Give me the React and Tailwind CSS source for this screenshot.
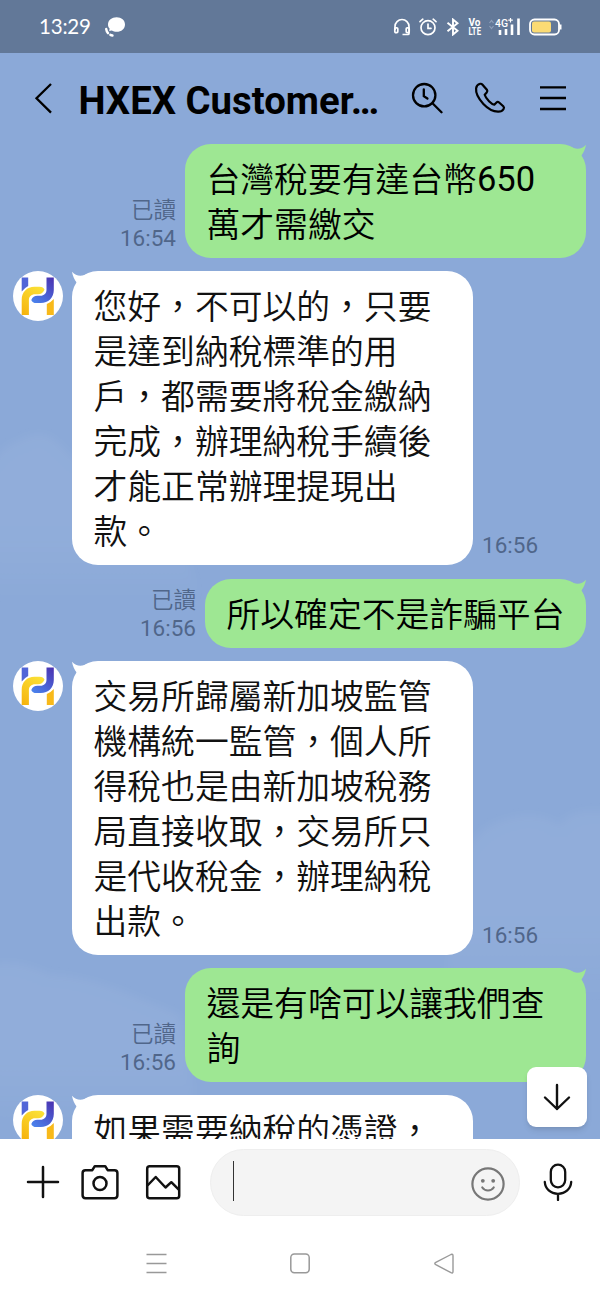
const messages = [
  { id: 1, mine: true, time: '16:54', lines: ['台灣稅要有達台幣650', '萬才需繳交'] },
  { id: 2, time: '16:56', lines: ['您好，不可以的，只要', '是達到納稅標準的用', '戶，都需要將稅金繳納', '完成，辦理納稅手續後', '才能正常辦理提現出', '款。'] },
  { id: 3, mine: true, short: true, time: '16:56', lines: ['所以確定不是詐騙平台'] },
  { id: 4, time: '16:56', lines: ['交易所歸屬新加坡監管', '機構統一監管，個人所', '得稅也是由新加坡稅務', '局直接收取，交易所只', '是代收稅金，辦理納稅', '出款。'] },
  { id: 5, mine: true, time: '16:56', lines: ['還是有啥可以讓我們查', '詢'] },
  { id: 6, lines: ['如果需要納稅的憑證，'] },
]

function StatusBar() {
  return (
    <div className="h-[53px] shrink-0 bg-[#627898] flex items-center pl-[39px] pr-[38px] text-white">
      <span className="font-['Lato','Roboto',sans-serif] text-[20.500px] leading-none w-[52px] tracking-[-0.200px] whitespace-nowrap">13:29</span>
      <svg className="ml-[13px] w-[22px] h-[22px]" viewBox="0 0 22 22" fill="none">
        <path d="M12.600 1.200c4.800 0 8.400 3.100 8.400 7.200s-3.600 7.400-8.400 7.400c-1.800 0-3.400-.4-4.800-1.300l-2.600.6.400-2.500C4.500 11.400 4 10 4 8.400c0-4.100 3.800-7.200 8.600-7.200z" fill="white" />
        <path d="M2.200 13c.4 3.200 2.600 5.900 6.300 6.500" stroke="white" strokeWidth="2.400" strokeLinecap="round" strokeDasharray="4.500 3" />
      </svg>
      <div className="flex-1" />
      <svg className="w-[18px] h-[18px]" viewBox="0 0 18 18" fill="none" stroke="white" strokeWidth="1.700">
        <path d="M2 12V8.500a7 7 0 0 1 14 0V12M16 12v3.500q0 1-1 1H9.500" />
        <rect x="1.800" y="9.800" width="3" height="4.800" rx="1" />
        <rect x="13.200" y="9.800" width="3" height="4.800" rx="1" />
      </svg>
      <svg className="ml-[8px] w-[18px] h-[18px]" viewBox="0 0 18 18" fill="none" stroke="white" strokeWidth="1.700" strokeLinecap="round">
        <circle cx="9" cy="9.700" r="7" />
        <path d="M9 6v4.300h3M1 3.600 3.800 1.200M17 3.600l-2.800-2.400" />
      </svg>
      <svg className="ml-[9px] w-[14px] h-[18px]" viewBox="0 0 14 18" fill="none" stroke="white" strokeWidth="1.900">
        <path d="m1.500 4.800 10 8-4.500 3.700v-15l4.500 3.700-10 8" />
      </svg>
      <svg className="ml-[8px] w-[14px] h-[20px]" viewBox="0 0 14 20" fill="white" fontFamily="Roboto" fontWeight="700" fontSize="10.500">
        <text x="0.500" y="9" textLength="12" lengthAdjust="spacingAndGlyphs">Vo</text>
        <text x="0.500" y="18" textLength="12.500" lengthAdjust="spacingAndGlyphs">LTE</text>
      </svg>
      <svg className="ml-[6px] w-[33px] h-[19px]" viewBox="0 0 33 19">
        <path d="M1.500 6 3.500 3.500l2 2.500M1.500 9 3.500 11.500l2-2.500" stroke="#8ea0ba" strokeWidth="1.200" fill="none" />
        <text x="7" y="9.500" fontSize="11.500" fontWeight="500" fill="white" fontFamily="Roboto" textLength="13" lengthAdjust="spacingAndGlyphs">4G</text>
        <path d="M22.500 1v4.500M20.300 3.200h4.500" stroke="white" strokeWidth="1.200" />
        <path d="M12 13v5M18 12v6M24 7.500V18M30.500 1.500V18" stroke="white" strokeWidth="2.600" />
      </svg>
      <svg className="ml-[8px] w-[33px] h-[18px]" viewBox="0 0 33 18">
        <rect x="1" y="1.500" width="29" height="15" rx="4.500" stroke="white" strokeWidth="1.800" fill="none" />
        <rect x="3" y="3.500" width="19" height="11" rx="2" fill="#fbdb74" />
        <path d="M31.500 6.500v5" stroke="white" strokeWidth="2" />
      </svg>
    </div>
  )
}

function Header() {
  return (
    <div className="h-[91px] shrink-0 flex items-center pl-[34px] pr-[32px] text-black">
      <svg className="w-[20px] h-[32px] -mt-[2px]" viewBox="0 0 20 32" fill="none" stroke="currentColor" strokeWidth="2.300">
        <path d="M17 2 2.500 16.300 17 30.600" />
      </svg>
      <h1 className="ml-[24.500px] mt-[4px] w-[332.500px] font-['Roboto',sans-serif] font-bold text-[38.300px] leading-[44px] whitespace-nowrap">HXEX Customer…</h1>
      <svg className="w-[32px] h-[32px] shrink-0 -mt-[2px]" viewBox="0 0 32 32" fill="none" stroke="currentColor" strokeWidth="2.300" strokeLinecap="round">
        <circle cx="13.200" cy="13.200" r="11.200" />
        <path d="m21.500 21.300 9 9M12.800 7.500v6.600l3.600 2.400" />
      </svg>
      <svg className="ml-[31px] w-[32px] h-[32px] shrink-0 -mt-[1px]" viewBox="0 0 32 32" fill="none" stroke="currentColor" strokeWidth="2.200" strokeLinejoin="round">
        <path d="M6.100 1.800c-1.700.4-3.700 2-4 4.600C1.600 11 4.800 17 9.400 21.900c4.500 4.700 10 7.600 14.600 7.800 2.600.1 4.700-1.200 5.600-2.700.7-1.100.5-1.900-.3-2.700l-4.200-3.800c-.9-.8-1.800-.8-2.600 0l-2.200 2.200c-1.600-.4-3.500-1.700-5.300-3.500-2-2-3.700-4.500-4.300-6.500l2-2.200c.8-.9.9-1.800.2-2.700L8.300 2.500c-.6-.7-1.300-.9-2.200-.7z" />
      </svg>
      <svg className="ml-[33px] w-[28px] h-[28px] shrink-0 -mt-[1px]" viewBox="0 0 28 28" stroke="currentColor" strokeWidth="2.300">
        <path d="M1 3.300h26M1 14h26M1 25h26" />
      </svg>
    </div>
  )
}

function Avatar() {
  return (
    <svg className="w-[50px] h-[50px] shrink-0" viewBox="0 0 50 50" fill="none">
      <defs>
        <linearGradient id="blue" x1="41" y1="6" x2="20" y2="32" gradientUnits="userSpaceOnUse">
          <stop stopColor="#4b2fae" />
          <stop offset="1" stopColor="#4a84ee" />
        </linearGradient>
        <linearGradient id="gold" x1="12" y1="44" x2="30" y2="16" gradientUnits="userSpaceOnUse">
          <stop stopColor="#f6b40e" />
          <stop offset="1" stopColor="#fbe338" />
        </linearGradient>
      </defs>
      <circle cx="25" cy="25" r="25" fill="white" />
      <path d="M8.700 6.500h6.500v8.500q-3.800 2-6.500 5.500z" fill="#5266d8" />
      <path d="M33.500 6.500h7.300V19c0 7.700-5.500 13-13 13h-4.500c-2.500 0-4.500-1.100-5-3.100 1.200-2.800 3.300-4.200 6-4.200h3c3.900 0 6.200-2.400 6.200-6.300z" fill="url(#blue)" />
      <path d="M8.700 44V28.800c0-7.800 5.200-13.100 12.800-13.100h5c2.500 0 4.500 1 5 3-1.500 3-3.500 4.600-6.500 4.600h-2.800c-4 0-6.300 2.300-6.300 6.200V44z" fill="url(#gold)" />
      <path d="M33.800 33q4-1.600 7-5V44h-7z" fill="#f8b91a" />
    </svg>
  )
}

function Tail({ mine }) {
  return (
    <svg
      className={`absolute top-0 w-[16px] h-[16px] ${mine ? 'right-0 -scale-x-100 text-[#9ee793]' : 'left-0 text-white'}`}
      viewBox="0 0 16 16"
      fill="currentColor"
    >
      <path d="M0 .8C2.500 3.400 5 4.700 8.500 4.700c2.300 0 4.300-.7 6.500-1.700L15 15 5 12C2.500 9 .6 5 0 .8z" />
    </svg>
  )
}

function Meta({ time, read }) {
  return (
    <div className="flex flex-col items-end pb-[6px] text-[22.500px] leading-[28px] text-[#50668a] whitespace-nowrap">
      {read && <span className="font-[350]">已讀</span>}
      {time && <span>{time}</span>}
    </div>
  )
}

// Latin digits sit a touch higher and heavier than the CJK text around them
function Line({ text }) {
  return (
    <p className="h-[45px]">
      {text.split(/(\d+)/).map((part, i) =>
        /^\d+$/.test(part) ? <span key={i} className="inline-block -translate-y-[1.500px] font-normal text-[34.500px] leading-none">{part}</span> : part
      )}
    </p>
  )
}

function Message({ mine, short, time, lines }) {
  return (
    <div className={`flex shrink-0 items-end gap-[9px] ${mine ? 'justify-end pr-[14px]' : 'pl-[13px]'}`}>
      {mine ? <Meta time={time} read /> : <div className="self-start h-[50px]"><Avatar /></div>}
      <div className={`relative rounded-[26px] pt-[14px] pb-[10px] px-[21.500px] text-[33.800px] leading-[45px] font-[350] whitespace-nowrap ${short ? 'w-[381px]' : 'w-[401px]'} ${mine ? 'bg-[#9ee793] text-black' : 'bg-white text-[#111]'}`}>
        <Tail mine={mine} />
        {lines.map(line => <Line key={line} text={line} />)}
      </div>
      {!mine && <Meta time={time} />}
    </div>
  )
}

function Clouds() {
  return (
    <svg className="absolute inset-0 w-full h-full" viewBox="0 0 600 1086" fill="none">
      <defs>
        <linearGradient id="cloud" x1="0" y1="0" x2="0" y2="1">
          <stop stopColor="white" stopOpacity="0.050" />
          <stop offset="0.600" stopColor="white" stopOpacity="0.050" />
          <stop offset="1" stopColor="white" stopOpacity="0" />
        </linearGradient>
        <filter id="soft"><feGaussianBlur stdDeviation="5" /></filter>
      </defs>
      <g fill="url(#cloud)" filter="url(#soft)">
        <path d="M-10 412c8-10 17-22 30-24 8-6 18-8 28-5 12 6 20 20 34 28 40 20 100 50 120 140H-10z" />
        <path d="M470 792c10-15 25-24 42-27 18-5 36-2 48 8 6-12 20-17 50-14v190H440z" />
        <path d="M-10 912c20-5 40 0 60 10 40 0 80 20 130 40l20 110H-10z" />
      </g>
    </svg>
  )
}

function InputBar() {
  return (
    <div className="h-[86px] shrink-0 flex items-center pl-[26px] pr-[27px] text-[#111]">
      <svg className="w-[34px] h-[34px]" viewBox="0 0 34 34" stroke="currentColor" strokeWidth="2.500" strokeLinecap="round">
        <path d="M2 17h30M17 2v30" />
      </svg>
      <svg className="ml-[21px] w-[38px] h-[36px]" viewBox="0 0 38 36" fill="none" stroke="currentColor" strokeWidth="2.500" strokeLinejoin="round">
        <path d="M4.500 6.200h6.800l2.500-4h10.400l2.500 4h6.800q2.900 0 2.900 2.900v22.200q0 2.900-2.900 2.900h-29q-2.900 0-2.900-2.900V9.100q0-2.900 2.900-2.900z" />
        <circle cx="19" cy="19.500" r="6.500" />
      </svg>
      <svg className="ml-[26px] w-[36px] h-[36px]" viewBox="0 0 36 36" fill="none" stroke="currentColor" strokeWidth="2.500" strokeLinejoin="round">
        <rect x="2.200" y="2.200" width="32" height="32" rx="2.500" />
        <path d="M2.500 21.500 10.700 13l9.800 10.500 5.800-5.300 8 8" />
      </svg>
      <div className="ml-[29px] w-[310px] h-[67px] rounded-full bg-[#f4f4f4] border border-[#eee] flex items-center justify-between pl-[22px] pr-[14px]">
        <span className="w-px h-[40px] -mt-[2px] bg-[#333]" />
        <svg className="mt-[4px] w-[34px] h-[34px] text-[#777]" viewBox="0 0 34 34" fill="none" stroke="currentColor" strokeWidth="2.200" strokeLinecap="round">
          <circle cx="17" cy="17" r="15.600" />
          <circle cx="11.800" cy="13.800" r="1.900" fill="currentColor" stroke="none" />
          <circle cx="22.200" cy="13.800" r="1.900" fill="currentColor" stroke="none" />
          <path d="M11.300 20.500c2.700 4 8.700 4 11.400 0" />
        </svg>
      </div>
      <svg className="ml-[23px] w-[30px] h-[38px]" viewBox="0 0 30 38" fill="none" stroke="currentColor" strokeWidth="2.300" strokeLinecap="round">
        <rect x="7.800" y="1.700" width="14.400" height="22.600" rx="7.200" />
        <path d="M1.800 19c.4 6.800 5.700 11.800 13.200 11.800S27.800 25.800 28.200 19M15 31v6" />
      </svg>
    </div>
  )
}

function NavBar() {
  return (
    <div className="h-[75px] shrink-0 flex items-start justify-between pt-[28px] pl-[146px] pr-[145px] text-[#999]">
      <svg className="w-[21px] h-[22px]" viewBox="0 0 21 22" stroke="currentColor" strokeWidth="1.500">
        <path d="M.5 1.500h20M.5 10.500h20M.5 19.500h20" />
      </svg>
      <svg className="w-[20px] h-[22px]" viewBox="0 0 20 22" fill="none" stroke="currentColor" strokeWidth="1.500">
        <rect x=".8" y="1" width="18.400" height="18.800" rx="3.500" />
      </svg>
      <svg className="w-[22px] h-[22px]" viewBox="0 0 22 22" fill="none" stroke="currentColor" strokeWidth="1.400" strokeLinejoin="round">
        <path d="M2.800 9.300 18 1.500q2-.8 2 1.200v15.800q0 2-2 1.200L2.800 11.700q-2-1.200 0-2.400z" />
      </svg>
    </div>
  )
}

export default function App() {
  return (
    <div lang="zh-TW" className="w-[600px] h-[1300px] flex flex-col overflow-hidden bg-white font-['Roboto','Noto_Sans_CJK_TC',sans-serif]">
      <StatusBar />
      <main className="relative h-[1086px] shrink-0 overflow-hidden bg-[#8ba9d8]">
        <Clouds />
        <div className="relative flex flex-col">
          <Header />
          <div className="flex flex-col gap-[13.250px]">
            {messages.map(m => <Message key={m.id} {...m} />)}
          </div>
        </div>
        <button className="absolute right-[13px] bottom-[12px] w-[60px] h-[60px] rounded-[9px] bg-white shadow-md flex items-center justify-center">
          <svg className="w-[28px] h-[28px]" viewBox="0 0 28 28" fill="none" stroke="#111" strokeWidth="2.400" strokeLinecap="round" strokeLinejoin="round">
            <path d="M14 2v24M2 14.500 14 26l12-11.500" />
          </svg>
        </button>
      </main>
      <InputBar />
      <NavBar />
    </div>
  )
}
